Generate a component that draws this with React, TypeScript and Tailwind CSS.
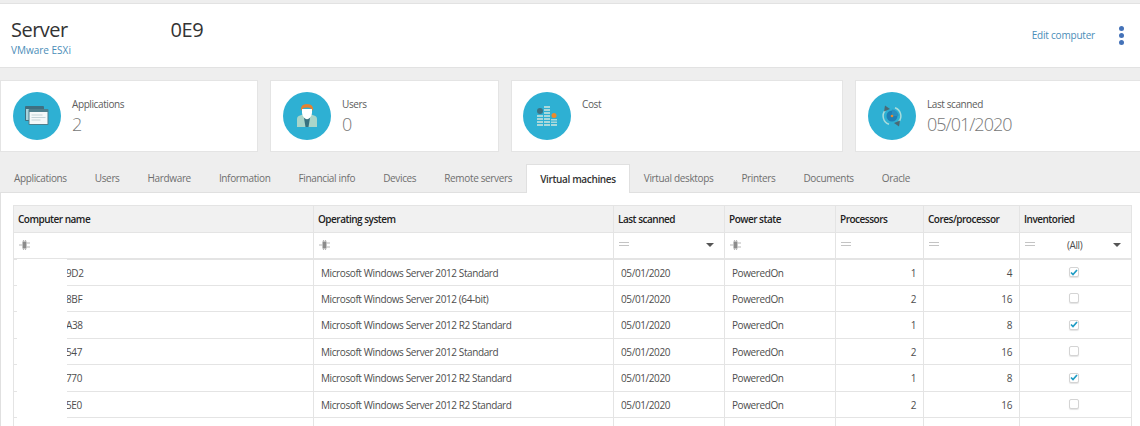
import type React from "react"

const font = "font-['Open_Sans','Noto_Sans',sans-serif]"

const tabs = [
  "Applications",
  "Users",
  "Hardware",
  "Information",
  "Financial info",
  "Devices",
  "Remote servers",
  "Virtual machines",
  "Virtual desktops",
  "Printers",
  "Documents",
  "Oracle",
]

const rows = [
  { name: "9D2", os: "Microsoft Windows Server 2012 Standard", procs: 1, cores: 4, inv: true },
  { name: "8BF", os: "Microsoft Windows Server 2012 (64-bit)", procs: 2, cores: 16, inv: false },
  { name: "A38", os: "Microsoft Windows Server 2012 R2 Standard", procs: 1, cores: 8, inv: true },
  { name: "547", os: "Microsoft Windows Server 2012 Standard", procs: 2, cores: 16, inv: false },
  { name: "770", os: "Microsoft Windows Server 2012 R2 Standard", procs: 1, cores: 8, inv: true },
  { name: "5E0", os: "Microsoft Windows Server 2012 R2 Standard", procs: 2, cores: 16, inv: false },
]

function AppsIcon() {
  return (
    <svg width="24" height="20" viewBox="0 0 24 20">
      <rect x="0" y="0" width="19" height="15" rx="1" fill="#3f6f80" />
      <rect x="1" y="3" width="17" height="11" fill="#a6d3dc" />
      <rect x="3.500" y="3" width="20" height="16" rx="1" fill="#4f7f8d" />
      <rect x="4.500" y="6" width="18" height="12" fill="#f4f8f9" />
      <rect x="6.500" y="8.500" width="11" height="1" fill="#c3d3d8" />
      <rect x="6.500" y="11" width="14" height="1" fill="#c3d3d8" />
      <rect x="6.500" y="13.500" width="9" height="1" fill="#c3d3d8" />
    </svg>
  )
}

function UserIcon() {
  return (
    <svg width="20" height="24" viewBox="0 0 20 24">
      <path d="M0 23V15q0-3 3-3.500L7 10h6l4 1.500q3 .5 3 3.500v8z" fill="#a9d5c9" />
      <path d="M7 14h6l-1.500 9h-3z" fill="#38727f" />
      <path d="M5 5h10v4q0 3-3 5.500-2 1.500-4 0Q5 12 5 9z" fill="#ffffff" />
      <path d="M4 7q-1-7 6-7t6 7q-1-3.500-6-3.500T4 7z" fill="#e6812f" />
    </svg>
  )
}

function CostIcon() {
  return (
    <svg width="20" height="21" viewBox="0 0 20 21">
      <circle cx="3" cy="5" r="3" fill="#3d7383" />
      <circle cx="17" cy="9.500" r="2.500" fill="#ee8a2b" />
      <path d="M0 9h6v2H0zM0 12h6v2H0zM0 15h6v2H0zM0 18h6v2H0z" fill="#a9d8db" />
      <path d="M7 0h6v2H7zM7 3h6v2H7zM7 6h6v2H7zM7 9h6v2H7zM7 12h6v2H7zM7 15h6v2H7zM7 18h6v2H7z" fill="#a9d8db" />
      <path d="M14 13h6v1.500h-6zM14 15.500h6V17h-6zM14 18h6v2h-6z" fill="#a9d8db" />
    </svg>
  )
}

function ScanIcon() {
  return (
    <svg width="26" height="26" viewBox="0 0 26 26">
      <circle cx="13" cy="13" r="5.500" fill="#1f7fb5" />
      <path d="M13 6.500A6.500 6.500 0 0 1 19.500 13H13z" fill="#2a8fc0" />
      <path d="M6.500 7A8.800 8.800 0 0 0 10 21.300" fill="none" stroke="#a9dcdc" strokeWidth="1.500" />
      <path d="M19.500 19A8.800 8.800 0 0 0 16 4.700" fill="none" stroke="#a9dcdc" strokeWidth="1.500" />
      <path d="M5 8.500L6 2.500l5 3.500z" fill="#4a6a75" />
      <path d="M21 17.500l-1 6-5-3.500z" fill="#4a6a75" />
      <circle cx="13" cy="13" r="1.300" fill="#ee8a2b" />
    </svg>
  )
}

function StatCard({ width, label, value, icon, circleClass = "ml-[12px]" }: { width: string; label: string; value?: string; icon: React.ReactNode; circleClass?: string }) {
  return (
    <div className={`${width} h-[72px] shrink-0 bg-white border border-[#e4e4e4] flex items-start`}>
      <div className={`${circleClass} mt-[11px] w-[48px] h-[48px] rounded-full bg-[#2eb0d3] flex items-center justify-center`}>{icon}</div>
      <div className="ml-[11px] mt-[16px]">
        <div className="text-[10px] tracking-[-0.4px] leading-[14px] text-[#5c5c5c]">{label}</div>
        {value && <div className="text-[18px] tracking-[-1px] leading-[24px] mt-[1px] text-[#777] font-light">{value}</div>}
      </div>
    </div>
  )
}

function TextFilterIcon() {
  return (
    <svg width="12" height="10" viewBox="0 0 12 10" className="mt-[-1px]">
      <path d="M3.500 1.500h4v7h-4z" fill="#8c8c8c" />
      <path d="M0 5h3.500M7.500 3H11M7.500 7H11M4.500 0v2M6.500 0v2M4.500 8v2M6.500 8v2" stroke="#b8b8b8" strokeWidth="1.200" />
    </svg>
  )
}

function EqualsIcon() {
  return (
    <div className="w-[10px] flex flex-col gap-[2px] mt-[-3px]">
      <div className="h-px bg-[#c4c4c4]" />
      <div className="h-px bg-[#c4c4c4]" />
    </div>
  )
}

function Caret() {
  return <div className="w-0 h-0 border-x-[4px] border-x-transparent border-t-[4px] border-t-[#555]" />
}

function Checkbox({ checked }: { checked: boolean }) {
  return (
    <div className="ml-[49px] w-[10px] h-[10px] rounded-[2px] border border-[#d4d4d4] bg-white shadow-[0_1px_1px_#e4e4e4] flex items-center justify-center">
      {checked && (
        <svg width="8" height="7" viewBox="0 0 8 7">
          <path d="M1 3.500l2 2L7 1" fill="none" stroke="#1f9cc4" strokeWidth="1.700" />
        </svg>
      )}
    </div>
  )
}

export default function App() {
  return (
    <div className={`${font} w-[1140px] h-[426px] overflow-hidden bg-[#eeeeee] pt-[3px]`}>
      <div className="h-[65px] bg-white border-y border-[#e2e2e2] flex items-start pl-[11px] pr-[16px]">
        <div className="w-[159.500px] mt-[12px]">
          <div className="text-[20px] tracking-[-0.5px] leading-[27px] text-[#333]">Server</div>
          <div className="text-[10px] leading-[14px] text-[#4b8db8]">VMware ESXi</div>
        </div>
        <div className="text-[20px] tracking-[-0.4px] leading-[27px] text-[#333] mt-[12px]">0E9</div>
        <div className="ml-auto flex items-center mt-[21px]">
          <span className="text-[10px] tracking-[-0.2px] leading-[20px] text-[#4b8db8]">Edit computer</span>
          <div className="ml-[24px] flex flex-col gap-[2px]">
            <div className="w-[5px] h-[5px] rounded-full bg-[#4472b8]" />
            <div className="w-[5px] h-[5px] rounded-full bg-[#4472b8]" />
            <div className="w-[5px] h-[5px] rounded-full bg-[#4472b8]" />
          </div>
        </div>
      </div>

      <div className="mt-[12px] flex gap-[12px]">
        <StatCard width="w-[258px]" label="Applications" value="2" icon={<AppsIcon />} />
        <StatCard width="w-[229px]" label="Users" value="0" icon={<UserIcon />} />
        <StatCard width="w-[332px]" label="Cost" icon={<CostIcon />} circleClass="ml-[11px]" />
        <StatCard width="w-[300px]" label="Last scanned" value="05/01/2020" icon={<ScanIcon />} />
      </div>

      <div className="mt-[12px] h-[29px] flex items-stretch">
        {tabs.map((t) => (
          <div
            key={t}
            className={
              t === "Virtual machines"
                ? "px-[13px] bg-white border border-b-0 border-[#e0e0e0] text-[10px] tracking-[-0.35px] leading-[28px] font-semibold text-[#333] relative z-10 h-[29px]"
                : "px-[14px] text-[10px] tracking-[-0.35px] leading-[28px] text-[#6e6e6e]"
            }
          >
            {t}
          </div>
        ))}
      </div>

      <div className="bg-white border-t border-l border-[#e0e0e0] h-[300px] pt-[12px] pl-[12px] mt-[-1px]">
        <div className="relative w-[1118px] text-[10px] tracking-[-0.4px] text-[#4d4d4d]">
          <table className="w-[1118px] table-fixed border-collapse">
            <colgroup>
              <col className="w-[300px]" />
              <col className="w-[300px]" />
              <col className="w-[111px]" />
              <col className="w-[111px]" />
              <col className="w-[88px]" />
              <col className="w-[96px]" />
              <col className="w-[112px]" />
            </colgroup>
            <thead>
              <tr className="h-[27px] bg-[#f1f1f1]">
                {["Computer name", "Operating system", "Last scanned", "Power state", "Processors", "Cores/processor", "Inventoried"].map((h) => (
                  <th key={h} className="border border-[#e4e4e4] px-[4px] text-left font-semibold tracking-[-0.5px] text-[#222]">
                    {h}
                  </th>
                ))}
              </tr>
              <tr className="h-[26px] border-b-2 border-[#e4e4e4]">
                <td className="border-x border-[#e4e4e4] px-[5px]"><TextFilterIcon /></td>
                <td className="border-x border-[#e4e4e4] px-[5px]"><TextFilterIcon /></td>
                <td className="border-x border-[#e4e4e4] px-[5px]">
                  <div className="flex items-center justify-between pr-[5px]"><EqualsIcon /><Caret /></div>
                </td>
                <td className="border-x border-[#e4e4e4] px-[5px]"><TextFilterIcon /></td>
                <td className="border-x border-[#e4e4e4] px-[5px]"><EqualsIcon /></td>
                <td className="border-x border-[#e4e4e4] px-[5px]"><EqualsIcon /></td>
                <td className="border-x border-[#e4e4e4] px-[5px]">
                  <div className="flex items-center pr-[5px]">
                    <EqualsIcon />
                    <span className="ml-[32px]">(All)</span>
                    <span className="ml-auto"><Caret /></span>
                  </div>
                </td>
              </tr>
            </thead>
            <tbody>
              {rows.map((r) => (
                <tr key={r.name} className="h-[26.500px] border-b border-[#e4e4e4]">
                  <td className="border-x border-[#e4e4e4] pl-[52px] pt-[2px]">{r.name}</td>
                  <td className="border-x border-[#e4e4e4] px-[7px] pt-[2px]">{r.os}</td>
                  <td className="border-x border-[#e4e4e4] px-[7px] pt-[2px]">05/01/2020</td>
                  <td className="border-x border-[#e4e4e4] px-[7px] pt-[2px]">PoweredOn</td>
                  <td className="border-x border-[#e4e4e4] px-[7px] pt-[2px] text-right">{r.procs}</td>
                  <td className="border-x border-[#e4e4e4] px-[7px] pt-[2px] text-right">{r.cores}</td>
                  <td className="border-x border-[#e4e4e4]"><Checkbox checked={r.inv} /></td>
                </tr>
              ))}
              <tr className="h-[26px]">
                {[0, 1, 2, 3, 4, 5, 6].map((i) => (
                  <td key={i} className="border-x border-[#e4e4e4]" />
                ))}
              </tr>
            </tbody>
          </table>
          {/* masked name column */}
          <div className="absolute left-[4px] top-[54px] w-[50px] h-[180px] bg-white" />
        </div>
      </div>
    </div>
  )
}
